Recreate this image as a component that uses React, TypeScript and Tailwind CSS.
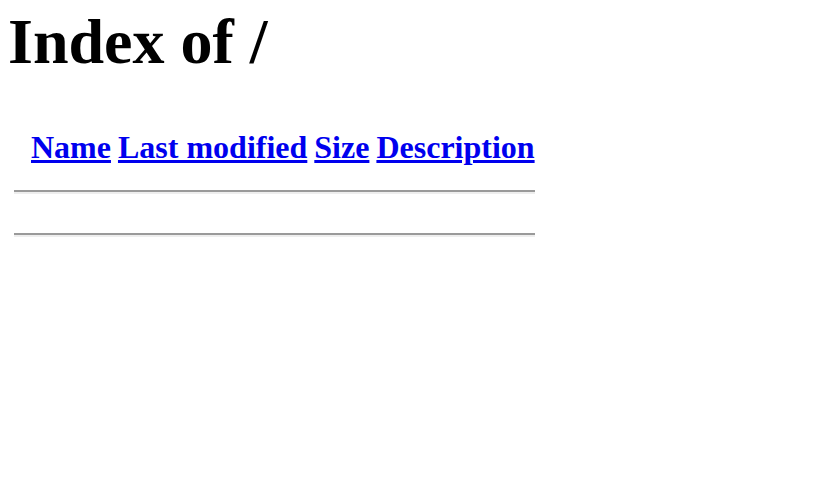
export default function App() {
  const cols = ["Name", "Last modified", "Size", "Description"];

  return (
    <div className="min-h-screen bg-white pl-[8px] pt-[6px] text-black font-['Liberation_Serif','Times_New_Roman',serif]">
      <h1 className="text-[64px] font-bold leading-[71px] mb-[53px]">Index of /</h1>

      {/* header row, first cell is the empty icon column */}
      <div className="flex gap-[7px] pl-[23px]">
        {cols.map((c) => (
          <a
            key={c}
            href="#"
            className="text-[32px] font-bold leading-[35px] text-[#0000ee] underline"
          >
            {c}
          </a>
        ))}
      </div>

      <hr className="ml-[6px] mt-[25px] w-[521px] border-0 border-t-2 border-b-2 border-t-[#9a9a9a] border-b-[#eeeeee]" />
      <hr className="ml-[6px] mt-[39px] w-[521px] border-0 border-t-2 border-b-2 border-t-[#9a9a9a] border-b-[#eeeeee]" />
    </div>
  );
}
